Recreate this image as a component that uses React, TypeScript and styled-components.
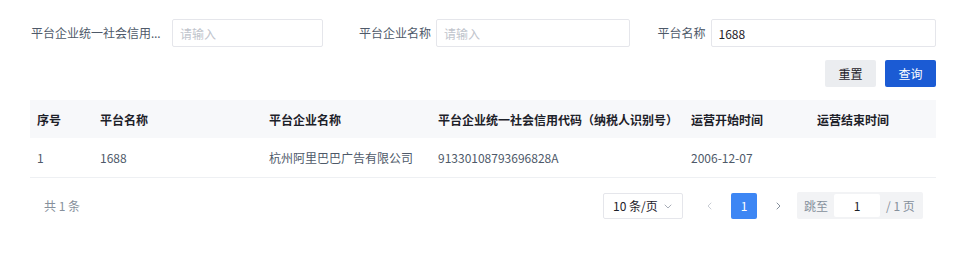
import styled, { createGlobalStyle } from "styled-components";

const GlobalStyle = createGlobalStyle`
  body {
    margin: 0;
    background: #ffffff;
    font-family: "Noto Sans CJK SC", "Noto Sans", sans-serif;
    font-size: 12px;
    color: #1d2129;
  }
`;

const Page = styled.div`
  padding: 19px 19px 0 30px;
`;

const FormGrid = styled.div`
  display: grid;
  grid-template-columns: 293px 1fr 1fr;
  column-gap: 13px;
`;

const FormItem = styled.div<{ $labelWidth: number; $indent: number }>`
  display: flex;
  align-items: center;
  padding-left: ${(p) => p.$indent}px;

  label {
    width: ${(p) => p.$labelWidth}px;
    flex: none;
    margin-right: 5px;
    color: #4e5969;
    font-family: "Noto Sans", "Noto Sans CJK SC", sans-serif;
    white-space: nowrap;
    overflow: hidden;
    text-overflow: ellipsis;
    text-align: right;
  }
`;

const TextInput = styled.input`
  flex: 1;
  min-width: 0;
  height: 28px;
  box-sizing: border-box;
  border: 1px solid #e5e6eb;
  border-radius: 2px;
  padding: 0 7px;
  font-family: inherit;
  font-size: 12px;
  color: #1d2129;
  outline: none;

  &::placeholder {
    color: #c0c4cc;
  }
`;

const Actions = styled.div`
  display: flex;
  justify-content: flex-end;
  gap: 9px;
  margin-top: 13px;
`;

const Button = styled.button<{ $primary?: boolean }>`
  width: 51px;
  height: 27px;
  border: none;
  border-radius: 2px;
  font-family: inherit;
  font-size: 12px;
  cursor: pointer;
  background: ${(p) => (p.$primary ? "#1b5bd4" : "#ebedf0")};
  color: ${(p) => (p.$primary ? "#ffffff" : "#1d2129")};
`;

const Table = styled.table`
  width: 100%;
  margin-top: 13px;
  border-collapse: collapse;
  table-layout: fixed;

  th,
  td {
    padding: 0 8px 0 7px;
    text-align: left;
    white-space: nowrap;
    overflow: hidden;
  }

  th {
    height: 38px;
    background: #f7f8fa;
    font-weight: 600;
    color: #1d2129;
  }

  td {
    height: 39px;
    color: #4e5969;
    border-bottom: 1px solid #eef0f3;
  }
`;

const Footer = styled.div`
  display: flex;
  align-items: center;
  justify-content: space-between;
  margin-top: 14px;
  padding: 0 13px 0 14px;
`;

const Total = styled.span`
  color: #86909c;
`;

const Pager = styled.div`
  display: flex;
  align-items: center;
`;

const SizeSelect = styled.div`
  width: 80px;
  height: 26px;
  box-sizing: border-box;
  border: 1px solid #e5e6eb;
  border-radius: 2px;
  display: flex;
  align-items: center;
  justify-content: space-between;
  padding: 0 9px;
  margin-right: 14px;
  color: #1d2129;
`;

const PageButton = styled.div<{ $active?: boolean; $muted?: boolean }>`
  width: 26px;
  height: 26px;
  border-radius: 2px;
  display: flex;
  align-items: center;
  justify-content: center;
  margin-right: 8px;
  background: ${(p) => (p.$active ? "#3d86f4" : "transparent")};
  color: ${(p) => (p.$active ? "#ffffff" : p.$muted ? "#c9cdd4" : "#86909c")};
`;

const Jumper = styled.div`
  display: flex;
  align-items: center;
  width: 126px;
  height: 27px;
  box-sizing: border-box;
  background: #f2f3f5;
  border-radius: 2px;
  padding: 0 6px 0 7px;
  margin-left: -2px;
  color: #86909c;
  gap: 6px;
`;

const JumpInput = styled.div`
  width: 46px;
  height: 23px;
  background: #ffffff;
  border-radius: 2px;
  display: flex;
  align-items: center;
  justify-content: center;
  color: #1d2129;
`;

const Chevron = ({ dir }: { dir: "left" | "right" | "down" }) => {
  const d =
    dir === "left" ? "M6 2 L3 5 L6 8" : dir === "right" ? "M4 2 L7 5 L4 8" : "M2 4 L5 7 L8 4";
  return (
    <svg width="10" height="10" viewBox="0 0 10 10" fill="none">
      <path d={d} stroke="currentColor" strokeWidth="1" strokeLinecap="round" strokeLinejoin="round" />
    </svg>
  );
};

const columns = [
  { title: "序号", width: 63 },
  { title: "平台名称", width: 169 },
  { title: "平台企业名称", width: 169 },
  { title: "平台企业统一社会信用代码（纳税人识别号）", width: 253 },
  { title: "运营开始时间", width: 126 },
  { title: "运营结束时间", width: 126 },
];

const rows = [["1", "1688", "杭州阿里巴巴广告有限公司", "91330108793696828A", "2006-12-07", ""]];

function App() {
  return (
    <Page>
      <GlobalStyle />
      <FormGrid>
        <FormItem $labelWidth={136} $indent={1}>
          <label title="平台企业统一社会信用代码">平台企业统一社会信用代码</label>
          <TextInput placeholder="请输入" />
        </FormItem>
        <FormItem $labelWidth={73} $indent={22}>
          <label>平台企业名称</label>
          <TextInput placeholder="请输入" />
        </FormItem>
        <FormItem $labelWidth={49} $indent={14}>
          <label>平台名称</label>
          <TextInput defaultValue="1688" />
        </FormItem>
      </FormGrid>
      <Actions>
        <Button>重置</Button>
        <Button $primary>查询</Button>
      </Actions>
      <Table>
        <colgroup>
          {columns.map((c) => (
            <col key={c.title} style={{ width: c.width }} />
          ))}
        </colgroup>
        <thead>
          <tr>
            {columns.map((c) => (
              <th key={c.title}>{c.title}</th>
            ))}
          </tr>
        </thead>
        <tbody>
          {rows.map((r, i) => (
            <tr key={i}>
              {r.map((cell, j) => (
                <td key={j}>{cell}</td>
              ))}
            </tr>
          ))}
        </tbody>
      </Table>
      <Footer>
        <Total>共 1 条</Total>
        <Pager>
          <SizeSelect>
            <span>10 条/页</span>
            <span style={{ color: "#a9aeb8", display: "flex" }}>
              <Chevron dir="down" />
            </span>
          </SizeSelect>
          <PageButton $muted>
            <Chevron dir="left" />
          </PageButton>
          <PageButton $active>1</PageButton>
          <PageButton>
            <Chevron dir="right" />
          </PageButton>
          <Jumper>
            <span>跳至</span>
            <JumpInput>1</JumpInput>
            <span>/ 1 页</span>
          </Jumper>
        </Pager>
      </Footer>
    </Page>
  );
}

export default App;
